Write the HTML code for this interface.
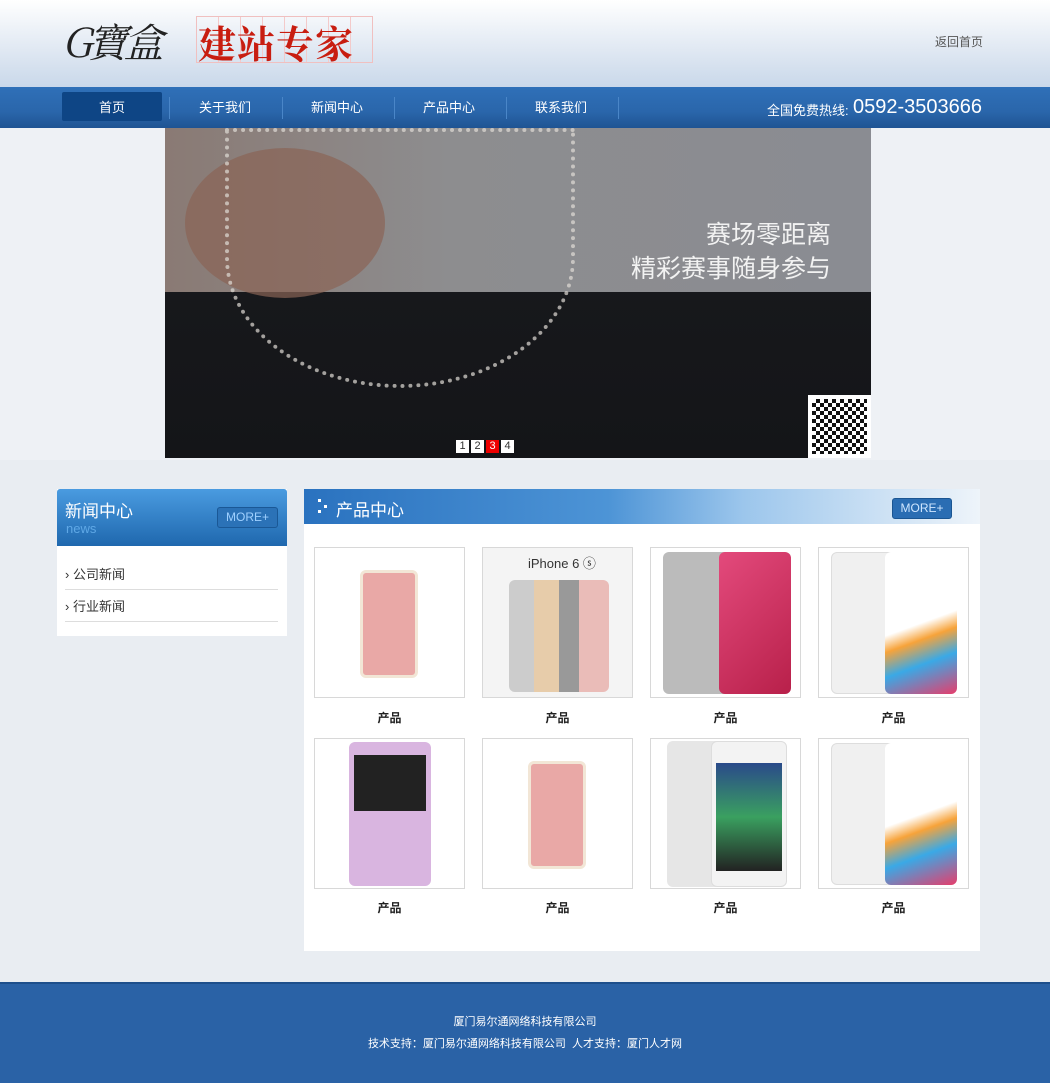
<!DOCTYPE html>
<html><head><meta charset="utf-8"><style>
*{margin:0;padding:0;box-sizing:border-box}
body{width:1050px;height:1083px;background:#e9edf2;font-family:"Liberation Sans","Noto Sans CJK SC",sans-serif;position:relative;overflow:hidden}
.abs{position:absolute}
#hd{left:0;top:0;width:1050px;height:87px;background:linear-gradient(#fff,#e4ebf4 50%,#c9d8ea)}
#nav{left:0;top:87px;width:1050px;height:41px;background:linear-gradient(#2f70b8,#2a66ab 60%,#1f5493)}
.ni{position:absolute;top:0;height:41px;line-height:41px;color:#fff;font-size:13px;text-align:center;width:112px}
.sep{position:absolute;top:10px;width:1px;height:22px;background:#1b4a82;border-right:1px solid #4a86c8}
#ban{left:0;top:128px;width:1050px;height:332px;background:#eef1f5}
.ph{position:absolute;width:151px;height:151px;border:1px solid #d8d8d8;background:#fff}
.lb{position:absolute;width:151px;text-align:center;font-size:12px;font-weight:bold;color:#222}
.phone{position:absolute;border-radius:6px}
</style></head><body>
<div id="hd" class="abs">
 <div class="abs" style="left:62px;top:12px;font-family:'Noto Serif CJK SC',serif;font-size:40px;color:#222;font-style:italic;letter-spacing:-4px">G寶盒</div>
 <div class="abs" style="left:196px;top:16px;width:177px;height:47px;border:1px solid #f0c0c0;background:repeating-linear-gradient(90deg,transparent 0 21px,#f3caca 21px 22px)"></div>
 <div class="abs" style="left:198px;top:14px;font-family:'Noto Serif CJK SC',serif;font-size:38px;font-weight:bold;color:#c81d10;letter-spacing:1px">建站专家</div>
 <div class="abs" style="left:935px;top:33px;font-size:12px;color:#555">返回首页</div>
</div>
<div id="nav" class="abs">
 <div class="abs" style="left:62px;top:5px;width:100px;height:29px;background:#0e4585;border-radius:2px"></div>
 <div class="ni" style="left:56px">首页</div>
 <div class="sep" style="left:169px"></div>
 <div class="ni" style="left:169px">关于我们</div>
 <div class="sep" style="left:282px"></div>
 <div class="ni" style="left:281px">新闻中心</div>
 <div class="sep" style="left:394px"></div>
 <div class="ni" style="left:393px">产品中心</div>
 <div class="sep" style="left:506px"></div>
 <div class="ni" style="left:505px">联系我们</div>
 <div class="sep" style="left:618px"></div>
 <div class="abs" style="left:767px;top:13px;color:#fff;font-size:13px">全国免费热线:</div>
 <div class="abs" style="left:853px;top:9px;color:#fff;font-size:20px">0592-3503666</div>
</div>
<div id="ban" class="abs">
 <div class="abs" style="left:165px;top:0;width:706px;height:330px;background:linear-gradient(#1a1b1f,#141518);overflow:hidden">
  <div class="abs" style="left:0;top:0;width:706px;height:164px;background:linear-gradient(90deg,#8a7a74,#8d8d8f 40%,#8a8c92)"></div>
  <div class="abs" style="left:20px;top:20px;width:200px;height:150px;border-radius:50%;background:#8a6456;opacity:.7"></div>
  <div class="abs" style="left:60px;top:0;width:350px;height:260px;border:4px dotted #e0dcd6;border-radius:0 0 50% 50%;opacity:.7"></div>
  <div class="abs" style="left:440px;top:90px;color:#f2f2f2;font-size:25px;text-align:right;width:226px;line-height:34px">赛场零距离<br>精彩赛事随身参与</div>
  <div class="abs" style="left:643px;top:267px;width:63px;height:63px;background:#fff;padding:4px"><div style="width:55px;height:55px;background:repeating-conic-gradient(#111 0 25%,#fff 0 50%) 0 0/8px 8px"></div></div>
  <div class="abs" style="left:291px;top:312px;font-size:11px;line-height:13px">
   <span style="display:inline-block;width:13px;background:#fff;text-align:center;color:#333;margin-right:2px">1</span><span style="display:inline-block;width:13px;background:#fff;text-align:center;color:#333;margin-right:2px">2</span><span style="display:inline-block;width:13px;background:#e00;text-align:center;color:#fff;margin-right:2px">3</span><span style="display:inline-block;width:13px;background:#fff;text-align:center;color:#333">4</span>
  </div>
 </div>
</div>
<div class="abs" style="left:57px;top:489px;width:230px;height:147px;background:#fff">
 <div style="height:57px;background:linear-gradient(#4a9be0,#1f68ae);border-radius:3px 3px 0 0;position:relative">
  <div class="abs" style="left:8px;top:8px;color:#fff;font-size:17px">新闻中心</div>
  <div class="abs" style="left:9px;top:32px;color:#5fa8e6;font-size:13px">news</div>
  <div class="abs" style="left:160px;top:18px;width:61px;height:21px;border:1px solid #1a5896;background:#2b72b7;border-radius:3px;color:#9fd0ff;font-size:12px;text-align:center;line-height:19px">MORE+</div>
 </div>
 <div class="abs" style="left:8px;top:75px;font-size:13px;color:#333;width:213px;border-bottom:1px solid #ddd;height:26px">› 公司新闻</div>
 <div class="abs" style="left:8px;top:107px;font-size:13px;color:#333;width:213px;border-bottom:1px solid #ddd;height:26px">› 行业新闻</div>
</div>
<div class="abs" style="left:304px;top:489px;width:676px;height:462px;background:#fff">
 <div style="height:35px;background:linear-gradient(90deg,#2a72bf,#4d94d6 45%,#9cc6ec 65%,#eef4fa);position:relative">
  <div class="abs" style="left:14px;top:10px;width:3px;height:3px;background:#fff"></div>
  <div class="abs" style="left:14px;top:21px;width:3px;height:3px;background:#fff"></div>
  <div class="abs" style="left:20px;top:16px;width:3px;height:3px;background:#fff"></div>
  <div class="abs" style="left:32px;top:7px;color:#fff;font-size:17px">产品中心</div>
  <div class="abs" style="left:588px;top:9px;width:60px;height:21px;background:#2a6db3;border:1px solid #1a5592;border-radius:3px;color:#cfe6ff;font-size:12px;text-align:center;line-height:19px">MORE+</div>
 </div>
</div>
<div class="ph" style="left:314px;top:547px"><div class="phone" style="left:45px;top:22px;width:58px;height:108px;background:#e9a8a6;border:3px solid #f2e6d6"></div></div>
<div class="ph" style="left:482px;top:547px;background:#f4f4f4"><div class="abs" style="left:45px;top:5px;font-size:13px;color:#333">iPhone 6 ⓢ</div><div class="phone" style="left:26px;top:32px;width:100px;height:112px;background:linear-gradient(90deg,#ccc 0 25%,#e7ccaa 25% 50%,#999 50% 70%,#eabcb8 70%)"></div></div>
<div class="ph" style="left:650px;top:547px"><div class="phone" style="left:12px;top:4px;width:70px;height:142px;background:#bbb"></div><div class="phone" style="left:68px;top:4px;width:72px;height:142px;background:linear-gradient(135deg,#e34a7c,#b8204a)"></div></div>
<div class="ph" style="left:818px;top:547px"><div class="phone" style="left:12px;top:4px;width:70px;height:142px;background:#f0f0f0;border:1px solid #ddd"></div><div class="phone" style="left:66px;top:4px;width:72px;height:142px;background:linear-gradient(160deg,#fff 50%,#f7a33a 60%,#3aa9e6 75%,#e73d6b)"></div></div>
<div class="ph" style="left:314px;top:738px"><div class="phone" style="left:34px;top:3px;width:82px;height:144px;background:#d9b5e0"></div><div class="abs" style="left:39px;top:16px;width:72px;height:56px;background:#222"></div></div>
<div class="ph" style="left:482px;top:738px"><div class="phone" style="left:45px;top:22px;width:58px;height:108px;background:#e9a8a6;border:3px solid #f2e6d6"></div></div>
<div class="ph" style="left:650px;top:738px"><div class="phone" style="left:16px;top:2px;width:64px;height:146px;background:#e6e6e6"></div><div class="phone" style="left:60px;top:2px;width:76px;height:146px;background:#f3f3f3;border:1px solid #ddd"></div><div class="abs" style="left:65px;top:24px;width:66px;height:108px;background:linear-gradient(#2a4a8a,#3aa060 50%,#222)"></div></div>
<div class="ph" style="left:818px;top:738px"><div class="phone" style="left:12px;top:4px;width:70px;height:142px;background:#f0f0f0;border:1px solid #ddd"></div><div class="phone" style="left:66px;top:4px;width:72px;height:142px;background:linear-gradient(160deg,#fff 50%,#f7a33a 60%,#3aa9e6 75%,#e73d6b)"></div></div>
<div class="lb" style="left:314px;top:709px">产品</div>
<div class="lb" style="left:482px;top:709px">产品</div>
<div class="lb" style="left:650px;top:709px">产品</div>
<div class="lb" style="left:818px;top:709px">产品</div>
<div class="lb" style="left:314px;top:899px">产品</div>
<div class="lb" style="left:482px;top:899px">产品</div>
<div class="lb" style="left:650px;top:899px">产品</div>
<div class="lb" style="left:818px;top:899px">产品</div>
<div class="abs" style="left:0;top:982px;width:1050px;height:101px;background:#2a62a6;border-top:2px solid #1d4f8c;color:#fff;font-size:11px;text-align:center;line-height:16px">
 <div style="margin-top:30px">厦门易尔通网络科技有限公司</div>
 <div style="margin-top:6px">技术支持：厦门易尔通网络科技有限公司 &nbsp;人才支持：厦门人才网</div>
</div>
</body></html>
